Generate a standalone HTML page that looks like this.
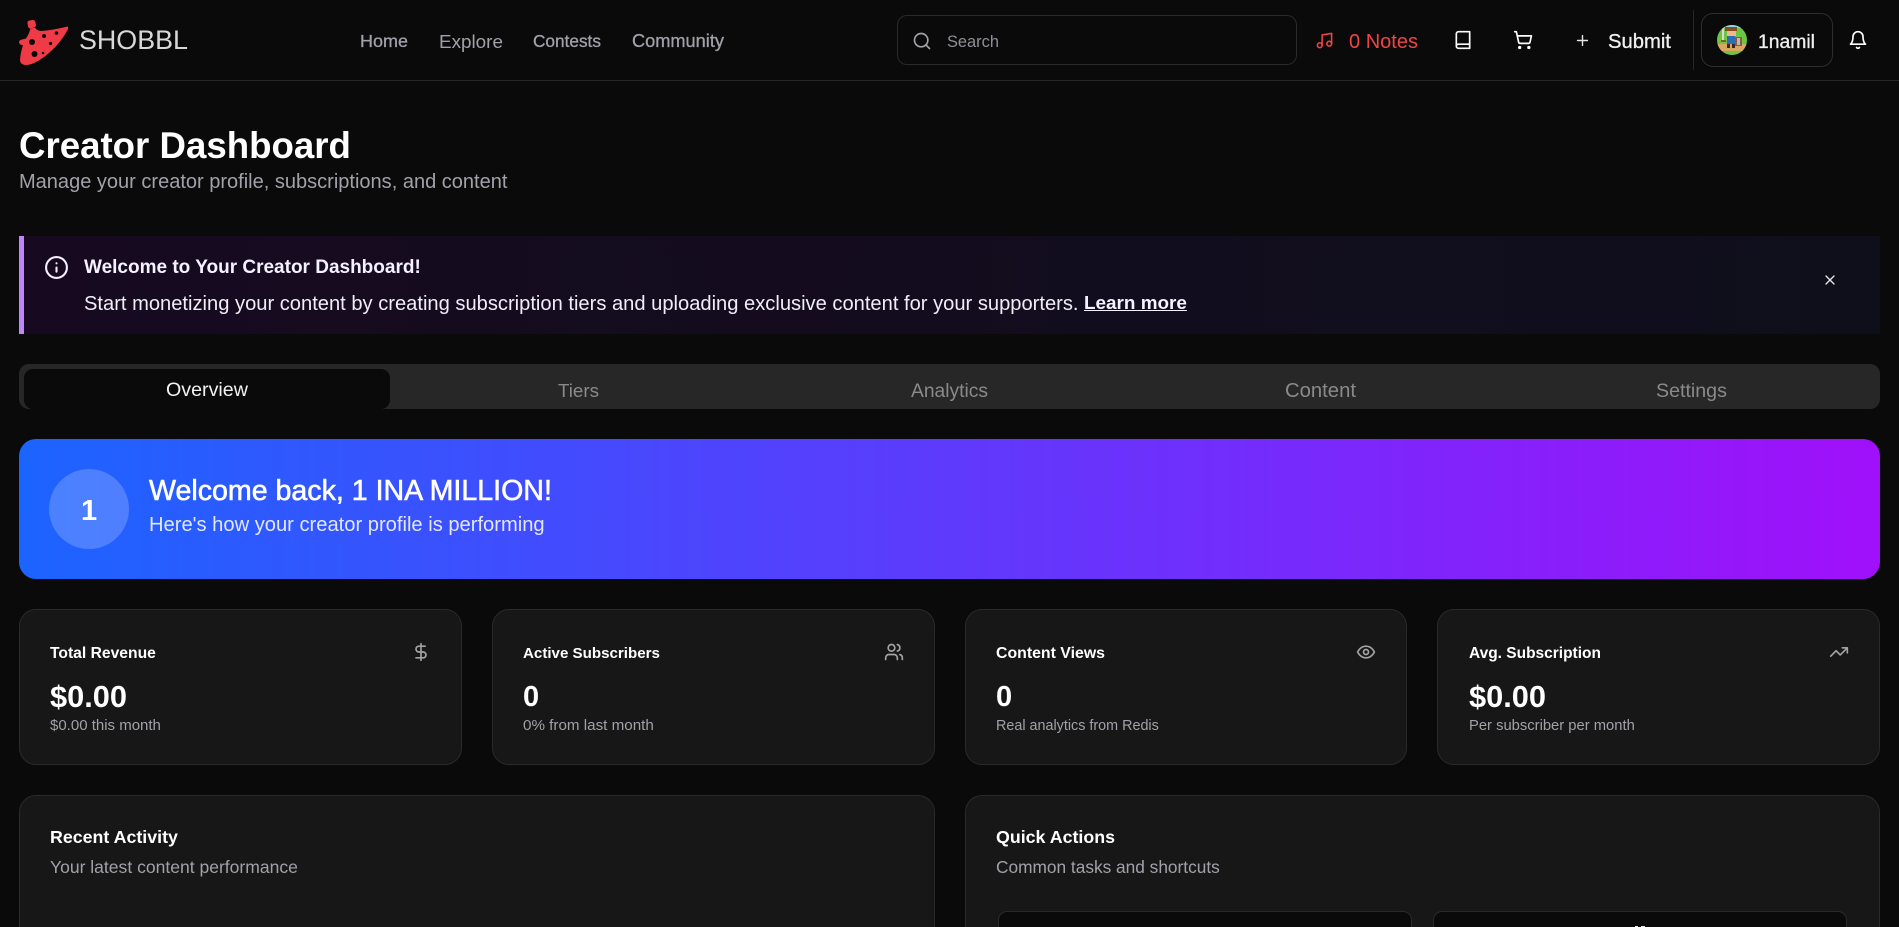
<!DOCTYPE html>
<html lang="en"><head><meta charset="utf-8"><title>Creator Dashboard</title>
<style>
*{box-sizing:border-box;margin:0;padding:0}
html,body{width:1899px;height:927px;overflow:hidden;background:#0a0a0a}
body{position:relative;font-family:"Liberation Sans",sans-serif;color:#fff}
.t{position:absolute;white-space:nowrap;line-height:24px;display:block}
.b{position:absolute;display:block}
.i{position:absolute;fill:none;stroke:currentColor;stroke-width:2;stroke-linecap:round;stroke-linejoin:round}
.m{-webkit-text-stroke:.3px currentColor}
.g{color:#a1a1aa}
.card{position:absolute;background:#171717;border:1px solid #2a2a2a;border-radius:17px}
.cut{border-bottom:none;border-bottom-left-radius:0;border-bottom-right-radius:0}
.sl{font-size:16px;font-weight:700}
.sv{font-size:29px;font-weight:700}
.ss{font-size:14px;color:#a1a1aa}
.tab{font-size:18px;color:#8a8a8a}
</style></head><body>
<header class="b" style="left:0;top:0;width:1899px;height:81px;border-bottom:1px solid #262626">
<svg class="b" style="left:0;top:0" width="80" height="80" viewBox="0 0 80 80">
<path fill="#ef3b45" d="M27.500 23.500q-.5-2.500 2-3l3-.5q2.500 0 3 2.500l.5 3q-.5 1.500-2 2l-3.500 1q-2 0-2.500-2z"/>
<path fill="#ef3b45" d="M67.500 26.500Q68.500 27 68 29Q64 37 57 45Q48 55 38 61Q30 65.500 25 65Q20 64 20 60Q20.500 53 23 45Q20 45.500 19 42.500Q19 40 22 39.500L26 38.500Q29 34 30.500 28.500L35 27.500Q37 31 41 31Q54 30 67.500 26.500Z"/>
<g fill="#0a0a0a"><circle cx="32" cy="42" r="3"/><circle cx="44" cy="36" r="2"/><circle cx="34.500" cy="54" r="3"/><circle cx="50.500" cy="43.500" r="1.600"/><circle cx="56.500" cy="33" r="1.800"/><circle cx="43" cy="53" r="1.300"/></g>
</svg>
<a class="t" style="left:79px;top:28px;font-size:25px;color:#d8d8d8;--w:109">SHOBBL</a>
<nav>
<a class="t g m" style="left:360px;top:29px;font-size:17px;--w:48">Home</a>
<a class="t g" style="left:439px;top:30px;font-size:18px;--w:64">Explore</a>
<a class="t g m" style="left:533px;top:29px;font-size:17px;--w:68">Contests</a>
<a class="t g m" style="left:632px;top:29px;font-size:17px;--w:92">Community</a>
</nav>
<div class="b" style="left:897px;top:15px;width:400px;height:50px;border:1px solid #2a2a2a;border-radius:10px"></div>
<svg class="i" style="left:912px;top:31px;color:#a1a1aa" width="20" height="20" viewBox="0 0 24 24" stroke-width="1.700"><circle cx="11" cy="11" r="8"/><path d="m21 21-4.300-4.300"/></svg>
<span class="t" style="left:947px;top:30px;font-size:17px;color:#8f8f96;--w:52">Search</span>
<svg class="i" style="left:1315px;top:31px;color:#ef4444" width="19" height="19" viewBox="0 0 24 24" stroke-width="1.800"><path d="M9 18V5l12-2v13"/><circle cx="6" cy="18" r="3"/><circle cx="18" cy="16" r="3"/></svg>
<span class="t" style="left:1349px;top:30px;font-size:19px;color:#ef4444;--w:69">0 Notes</span>
<svg class="i" style="left:1453px;top:30px" width="20" height="20" viewBox="0 0 24 24" stroke-width="1.800"><path d="M4 19.500v-15A2.500 2.500 0 0 1 6.500 2H20v20H6.500a2.500 2.500 0 0 1 0-5H20"/></svg>
<svg class="i" style="left:1513px;top:30px" width="20" height="20" viewBox="0 0 24 24" stroke-width="1.800"><circle cx="8" cy="21" r="1"/><circle cx="19" cy="21" r="1"/><path d="M2.050 2.050h2l2.660 12.420a2 2 0 0 0 2 1.580h9.780a2 2 0 0 0 1.950-1.570l1.650-7.430H5.120"/></svg>
<svg class="i" style="left:1574px;top:32px;color:#e5e5e5" width="17" height="17" viewBox="0 0 24 24"><path d="M5 12h14M12 5v14"/></svg>
<span class="t m" style="left:1608px;top:30px;font-size:18px;color:#f0f0f0;--w:63">Submit</span>
<div class="b" style="left:1693px;top:10px;width:1px;height:60px;background:#262626"></div>
<div class="b" style="left:1701px;top:13px;width:132px;height:54px;border:1px solid #2e2e2e;border-radius:12px"></div>
<svg class="b" style="left:1717px;top:25px" width="30" height="30" viewBox="0 0 30 30">
<defs><clipPath id="av"><circle cx="15" cy="15" r="15"/></clipPath></defs>
<g clip-path="url(#av)"><rect width="30" height="30" fill="#6cc644"/><rect width="30" height="3" fill="#8fd6e6"/><rect y="19" width="30" height="7" fill="#d9a860"/>
<rect x="5" y="3" width="2" height="14" fill="#d8d8d8"/><rect x="4" y="15" width="5" height="2" fill="#8a5a2b"/>
<rect x="8" y="2" width="12" height="4" fill="#8a4d22"/><rect x="10" y="6" width="9" height="5" fill="#efb98a"/>
<rect x="10" y="11" width="8" height="8" fill="#2f6db5"/><rect x="10" y="19" width="3" height="4" fill="#3a2a22"/><rect x="15" y="19" width="3" height="4" fill="#3a2a22"/>
<rect x="18" y="12" width="7" height="9" fill="#8d5a44"/><rect x="20" y="13" width="3" height="7" fill="#b9b9b9"/></g></svg>
<span class="t m" style="left:1758px;top:30px;font-size:18px;color:#f0f0f0;--w:57">1namil</span>
<svg class="i" style="left:1848px;top:30px" width="20" height="20" viewBox="0 0 24 24" stroke-width="1.800"><path d="M6 8a6 6 0 0 1 12 0c0 7 3 9 3 9H3s3-2 3-9"/><path d="M10.300 21a1.940 1.940 0 0 0 3.400 0"/></svg>
</header>
<main>
<h1 class="t" style="left:19px;top:134px;font-size:36px;line-height:24px;font-weight:700;--w:332">Creator Dashboard</h1>
<p class="t" style="left:19px;top:170px;font-size:19px;color:#a1a1aa;--w:489">Manage your creator profile, subscriptions, and content</p>

<section class="b" style="left:19px;top:236px;width:1861px;height:98px;background:linear-gradient(90deg,#170a20,#0f0f1c);border-left:5px solid #c084fc"></section>
<svg class="i" style="left:44px;top:255px;color:#f4f0ff" width="25" height="25" viewBox="0 0 24 24" stroke-width="1.600"><circle cx="12" cy="12" r="10"/><path d="M12 16v-4M12 8h.01"/></svg>
<b class="t" style="left:84px;top:256px;font-size:18px;color:#f5f1ff;--w:337">Welcome to Your Creator Dashboard!</b>
<p class="t" style="left:84px;top:292px;font-size:18px;color:#f0edf8;--w:995">Start monetizing your content by creating subscription tiers and uploading exclusive content for your supporters.</p>
<a class="t" style="left:1084px;top:292px;font-size:18px;font-weight:700;color:#f5f1ff;text-decoration:underline;--w:103">Learn more</a>
<svg class="i" style="left:1822px;top:272px;color:#e6e6ea" width="16" height="16" viewBox="0 0 24 24" stroke-width="1.800"><path d="M18 6 6 18M6 6l12 12"/></svg>

<div class="b" style="left:19px;top:364px;width:1861px;height:45px;background:#272727;border-radius:10px"></div>
<div class="b" style="left:24px;top:369px;width:366px;height:40px;background:#0a0a0a;border-radius:9px"></div>
<span class="t" style="left:166px;top:378px;font-size:18px;color:#f2f2f2;--w:82">Overview</span>
<span class="t tab" style="left:558px;top:379px;--w:41">Tiers</span>
<span class="t tab" style="left:911px;top:380px;--w:77">Analytics</span>
<span class="t tab" style="left:1285px;top:379px;--w:71">Content</span>
<span class="t tab" style="left:1656px;top:379px;--w:71">Settings</span>

<section class="b" style="left:19px;top:439px;width:1861px;height:140px;border-radius:17px;background:linear-gradient(90deg,#1c64ff,#a010fa)"></section>
<div class="b" style="left:49px;top:469px;width:80px;height:80px;border-radius:50%;background:rgba(255,255,255,.2)"></div>
<b class="t" style="left:81px;top:499px;font-size:29px;width:16px;text-align:center">1</b>
<h2 class="t" style="left:149px;top:479px;font-size:30px;font-weight:400;-webkit-text-stroke:.6px #fff;--w:403">Welcome back, 1 INA MILLION!</h2>
<p class="t" style="left:149px;top:513px;font-size:18px;color:#e3e6ff;--w:396">Here's how your creator profile is performing</p>

<div class="card" style="left:19px;top:609px;width:443px;height:156px"></div>
<b class="t sl" style="left:50px;top:642px;--w:106">Total Revenue</b>
<svg class="i" style="left:411px;top:642px;color:#a3a3a3" width="20" height="20" viewBox="0 0 24 24" stroke-width="1.600"><path d="M12 2v20M17 5H9.500a3.500 3.500 0 0 0 0 7h5a3.500 3.500 0 0 1 0 7H6"/></svg>
<b class="t sv" style="left:50px;top:685px;--w:77">$0.00</b>
<span class="t ss" style="left:50px;top:714px;--w:111">$0.00 this month</span>

<div class="card" style="left:492px;top:609px;width:443px;height:156px"></div>
<b class="t sl" style="left:523px;top:642px;--w:137">Active Subscribers</b>
<svg class="i" style="left:884px;top:642px;color:#a3a3a3" width="20" height="20" viewBox="0 0 24 24" stroke-width="1.600"><path d="M16 21v-2a4 4 0 0 0-4-4H6a4 4 0 0 0-4 4v2"/><circle cx="9" cy="7" r="4"/><path d="M22 21v-2a4 4 0 0 0-3-3.870M16 3.130a4 4 0 0 1 0 7.750"/></svg>
<b class="t sv" style="left:523px;top:685px">0</b>
<span class="t ss" style="left:523px;top:714px;--w:131">0% from last month</span>

<div class="card" style="left:965px;top:609px;width:442px;height:156px"></div>
<b class="t sl" style="left:996px;top:642px;--w:109">Content Views</b>
<svg class="i" style="left:1356px;top:642px;color:#a3a3a3" width="20" height="20" viewBox="0 0 24 24" stroke-width="1.600"><path d="M2 12s3-7 10-7 10 7 10 7-3 7-10 7-10-7-10-7Z"/><circle cx="12" cy="12" r="3"/></svg>
<b class="t sv" style="left:996px;top:685px">0</b>
<span class="t ss" style="left:996px;top:714px;--w:163">Real analytics from Redis</span>

<div class="card" style="left:1437px;top:609px;width:443px;height:156px"></div>
<b class="t sl" style="left:1469px;top:642px;--w:132">Avg. Subscription</b>
<svg class="i" style="left:1829px;top:642px;color:#a3a3a3" width="20" height="20" viewBox="0 0 24 24" stroke-width="1.600"><path d="M22 7l-8.500 8.500-5-5L2 17M16 7h6v6"/></svg>
<b class="t sv" style="left:1469px;top:685px;--w:77">$0.00</b>
<span class="t ss" style="left:1469px;top:714px;--w:166">Per subscriber per month</span>

<div class="card cut" style="left:19px;top:795px;width:916px;height:132px"></div>
<b class="t" style="left:50px;top:825px;font-size:18px;--w:128">Recent Activity</b>
<p class="t g" style="left:50px;top:855px;font-size:16.500px;--w:248">Your latest content performance</p>

<div class="card cut" style="left:965px;top:795px;width:915px;height:132px"></div>
<b class="t" style="left:996px;top:825px;font-size:18px;--w:119">Quick Actions</b>
<p class="t g" style="left:996px;top:855px;font-size:16.500px;--w:224">Common tasks and shortcuts</p>
<div class="b cut" style="left:998px;top:911px;width:414px;height:16px;background:#0a0a0a;border:1px solid #2a2a2a;border-bottom:none;border-radius:9px 9px 0 0"></div>
<div class="b cut" style="left:1433px;top:911px;width:414px;height:16px;background:#0a0a0a;border:1px solid #2a2a2a;border-bottom:none;border-radius:9px 9px 0 0"></div>
<div class="b" style="left:1635px;top:926px;width:3px;height:1px;background:#e8e8e8"></div>
<div class="b" style="left:1641px;top:926px;width:4px;height:1px;background:#e8e8e8"></div>
</main>
<script>
document.querySelectorAll('.t').forEach(function(e){
 var w=parseFloat(getComputedStyle(e).getPropertyValue('--w'));
 if(!w)return;
 var r=e.getBoundingClientRect().width;
 var f=parseFloat(getComputedStyle(e).fontSize);
 e.style.fontSize=(f*w/r)+'px';
});
</script>
</body></html>
